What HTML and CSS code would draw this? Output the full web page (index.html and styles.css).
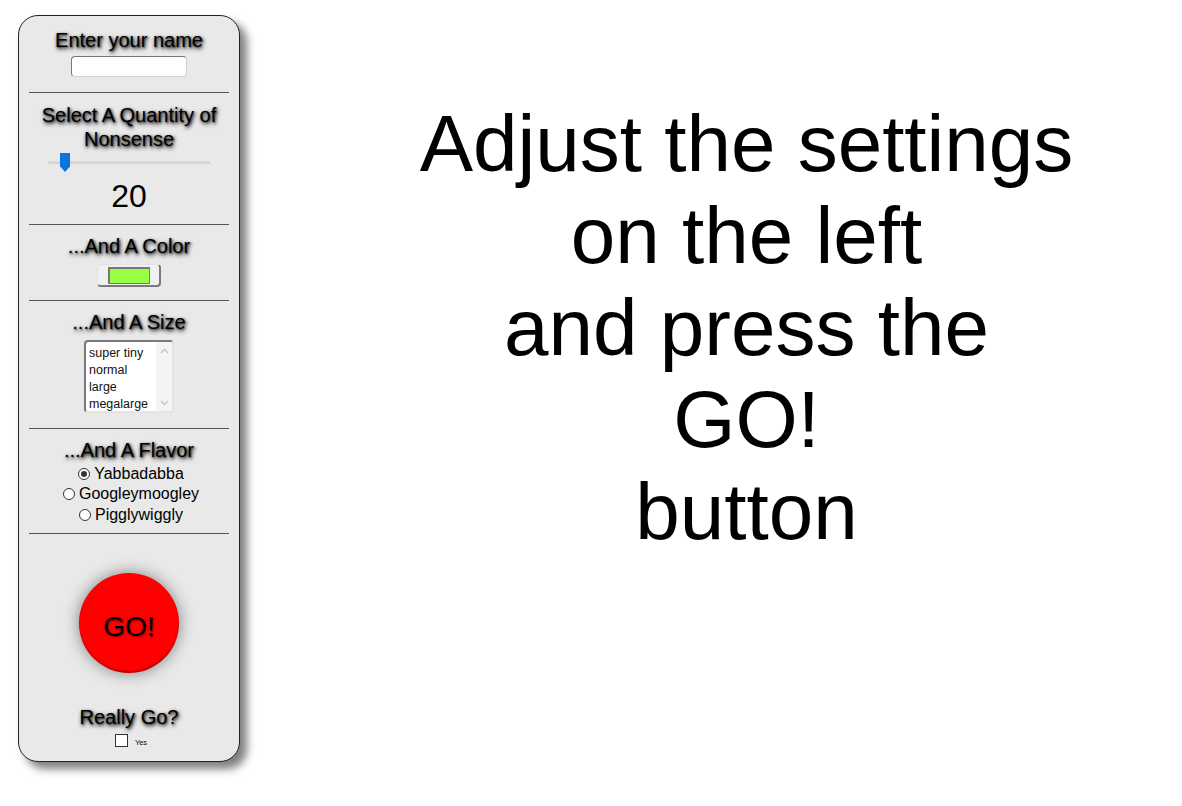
FILE: index.html
```html
<!DOCTYPE html>
<html>
<head>
<meta charset="utf-8">
<title>Nonsense Generator</title>
<link rel="stylesheet" href="styles.css">
</head>
<body>
<div class="page">
  <form class="panel">
    <div class="heading">Enter your name</div>
    <input class="name-input" type="text">
    <div class="rule"></div>

    <div class="heading quantity">Select A Quantity of Nonsense</div>
    <div class="slider">
      <div class="slider-track"></div>
      <div class="slider-thumb"></div>
    </div>
    <div class="value">20</div>
    <div class="rule"></div>

    <div class="heading">...And A Color</div>
    <div class="color-input"><div class="swatch"></div></div>
    <div class="rule"></div>

    <div class="heading">...And A Size</div>
    <div class="listbox">
      <div class="options">
        <div class="option">super tiny</div>
        <div class="option">normal</div>
        <div class="option">large</div>
        <div class="option">megalarge</div>
      </div>
      <div class="scrollbar">
        <svg class="chev" width="9" height="6" viewBox="0 0 9 6"><path d="M1 5 L4.5 1.5 L8 5" fill="none" stroke="#c4c4c4" stroke-width="1.3"/></svg>
        <svg class="chev" width="9" height="6" viewBox="0 0 9 6"><path d="M1 1 L4.5 4.5 L8 1" fill="none" stroke="#c4c4c4" stroke-width="1.3"/></svg>
      </div>
    </div>
    <div class="rule"></div>

    <div class="heading">...And A Flavor</div>
    <div class="radios">
      <div class="radio-row"><span class="radio checked"></span><span>Yabbadabba</span></div>
      <div class="radio-row"><span class="radio"></span><span>Googleymoogley</span></div>
      <div class="radio-row"><span class="radio"></span><span>Pigglywiggly</span></div>
    </div>
    <div class="rule"></div>

    <button class="go" type="button">GO!</button>

    <div class="heading really">Really Go?</div>
    <div class="check-row"><span class="checkbox"></span><span class="yes">Yes</span></div>
  </form>

  <main class="main">
    <div class="message">Adjust the settings<br>on the left<br>and press the<br>GO!<br>button</div>
  </main>
</div>
</body>
</html>
```

FILE: styles.css
```css
html, body {
  margin: 0;
  padding: 0;
  background: #fff;
}

body {
  font-family: "Liberation Sans", Arial, sans-serif;
  color: #000;
}

.page {
  display: flex;
  align-items: flex-start;
  padding: 15px 0 20px 18px;
}

.panel {
  box-sizing: border-box;
  width: 222px;
  height: 747px;
  flex: none;
  margin: 0;
  padding: 12px 10px 0;
  border: 1px solid #222;
  border-radius: 20px;
  background: #e9e9e9;
  box-shadow: 7px 7px 9px rgba(0, 0, 0, 0.5);
  display: flex;
  flex-direction: column;
  align-items: center;
}

.heading {
  width: 100%;
  font-size: 20px;
  line-height: 24px;
  text-align: center;
  text-shadow: 1px 2px 4px #000, 1px 1px 2px rgba(0, 0, 0, 0.6);
}

.name-input {
  box-sizing: border-box;
  width: 116px;
  height: 21px;
  margin: 4px 0 0;
  padding: 0;
  border: 1px solid;
  border-color: #777 #d0d0d0 #d0d0d0 #777;
  border-radius: 4px;
  background: #fff;
}

.rule {
  align-self: stretch;
  height: 0;
  border-top: 1px solid #555;
  margin-top: 15px;
}

.rule + .heading { margin-top: 9px; }
.rule + .heading.quantity { margin-top: 10px; }

.slider {
  position: relative;
  width: 162px;
  height: 20px;
  margin-top: 2px;
}

.slider-track {
  position: absolute;
  left: 0;
  right: 0;
  top: 8px;
  height: 2px;
  background: #d8d8d8;
  border-bottom: 1px solid #d0d0d0;
}

.slider-thumb {
  position: absolute;
  left: 12px;
  top: 0;
  width: 10px;
  height: 19px;
  background: #0a74da;
  clip-path: polygon(0 0, 100% 0, 100% 70%, 50% 100%, 0 70%);
}

.value {
  margin-top: 5px;
  font-size: 32px;
  line-height: 36px;
  text-align: center;
}

.value + .rule { margin-top: 10px; }

.color-input {
  box-sizing: border-box;
  width: 64px;
  height: 23px;
  margin-top: 6px;
  padding: 2px 10px;
  border: 1px solid;
  border-color: #e2e2e2 #7a7a7a #7a7a7a #e2e2e2;
  border-width: 1px 2px 2px 1px;
  border-radius: 4px;
  background: #f0f0f0;
}

.swatch {
  box-sizing: border-box;
  width: 42px;
  height: 17px;
  border: 1px solid #777;
  border-width: 2px 1px 1px 2px;
  background: #99ff44;
}

.color-input + .rule { margin-top: 13px; }

.listbox {
  box-sizing: border-box;
  width: 90px;
  height: 73px;
  margin-top: 6px;
  display: flex;
  border: 2px solid;
  border-color: #7a7a7a #e4e4e4 #e4e4e4 #7a7a7a;
  border-radius: 4px;
  background: #fff;
  overflow: hidden;
}

.options {
  flex: 1;
  padding: 3px 0 0 3px;
  font-size: 12.5px;
  line-height: 17px;
  color: #111;
  white-space: nowrap;
}

.scrollbar {
  width: 16px;
  flex: none;
  background: #f4f4f4;
  display: flex;
  flex-direction: column;
  justify-content: space-between;
  align-items: center;
  padding: 6px 0 5px;
}

.chev { display: block; }

.listbox + .rule { margin-top: 15px; }

.radios {
  display: flex;
  flex-direction: column;
  align-items: center;
  padding-top: 1.5px;
  font-size: 16px;
  line-height: 20.5px;
}

.radio-row {
  display: flex;
  align-items: center;
}

.radio {
  box-sizing: border-box;
  width: 12px;
  height: 12px;
  margin: 0 4px 0 4px;
  border: 1px solid #333;
  border-radius: 50%;
  background: #fff;
  position: relative;
}

.radio.checked::after {
  content: "";
  position: absolute;
  left: 2px;
  top: 2px;
  width: 6px;
  height: 6px;
  border-radius: 50%;
  background: #333;
}

.radios + .rule { margin-top: 8px; }

.go {
  width: 100px;
  height: 100px;
  margin-top: 39px;
  padding: 8px 0 0;
  border: none;
  border-radius: 50%;
  background: #ff0000;
  box-shadow: 0 0 16px rgba(0, 0, 0, 0.45), inset 0 -2px 2px rgba(0, 0, 0, 0.25);
  font-family: "Liberation Sans", Arial, sans-serif;
  font-size: 28px;
  color: #000;
  text-shadow: 1px 1px 2px rgba(0, 0, 0, 0.5);
}

.heading.really { margin-top: 32px; }

.check-row {
  display: flex;
  align-items: flex-end;
  margin-top: 5px;
  margin-left: 4px;
}

.checkbox {
  box-sizing: border-box;
  width: 13px;
  height: 13px;
  border: 1px solid #333;
  background: #fff;
}

.yes {
  margin-left: 7px;
  font-size: 7.5px;
  line-height: 8px;
  color: #111;
}

.main {
  flex: 1;
  margin-left: 71px;
  padding-top: 83px;
}

.message {
  font-size: 80px;
  line-height: 92px;
  text-align: center;
}
```
